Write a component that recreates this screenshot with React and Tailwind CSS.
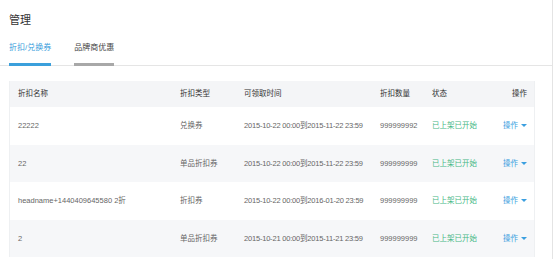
import React from "react";

const rows = [
  {
    name: "22222",
    type: "兑换券",
    time: "2015-10-22 00:00到2015-11-22 23:59",
    count: "999999992",
  },
  {
    name: "22",
    type: "单品折扣券",
    time: "2015-10-22 00:00到2015-11-22 23:59",
    count: "999999999",
  },
  {
    name: "headname+1440409645580 2折",
    type: "折扣券",
    time: "2015-10-22 00:00到2016-01-20 23:59",
    count: "999999999",
  },
  {
    name: "2",
    type: "单品折扣券",
    time: "2015-10-21 00:00到2015-11-21 23:59",
    count: "999999999",
  },
];

const cols =
  "grid grid-cols-[162px_64px_136px_52px_1fr_44px] items-center";

export default function App() {
  return (
    <div
      className="w-[553px] h-[259px] overflow-hidden bg-white border-r border-[#e4e4e4]"
      style={{ fontFamily: '"Liberation Sans", "Noto Sans CJK SC", sans-serif' }}
    >
      {/* Title */}
      <div className="pl-[9px] pt-[12px] text-[11px] leading-[16px] text-[#333]">
        管理
      </div>

      {/* Tabs */}
      <div className="mt-[14px] flex gap-[23px] pl-[9px] border-b border-[#e5e5e5]">
        <div className="text-[8px] leading-[12px] text-[#3ba0dc] pb-[9px] border-b-[3px] border-[#3ba0dc] -mb-px">
          折扣/兑换券
        </div>
        <div className="text-[8px] leading-[12px] text-[#444] pb-[9px] border-b-[3px] border-[#a8a8a8] -mb-px">
          品牌商优惠
        </div>
      </div>

      {/* Table */}
      <div className="mt-[15px] ml-[9px] w-[526px] border-x border-[#eef0f2] text-[7.5px]">
        <div className={`${cols} h-[26px] bg-[#f4f5f7] text-[#333]`}>
          <div className="pl-[8px]">折扣名称</div>
          <div className="pl-[8px]">折扣类型</div>
          <div className="pl-[8px]">可领取时间</div>
          <div className="pl-[8px]">折扣数量</div>
          <div className="pl-[8px]">状态</div>
          <div className="pr-[7px] text-right">操作</div>
        </div>

        {rows.map((item, i) => (
          <div
            key={i}
            className={`${cols} h-[37.5px] text-[#666] ${
              i % 2 === 1 ? "bg-[#f6f7f9]" : "bg-white"
            }`}
          >
            <div className="pl-[8px] whitespace-nowrap">{item.name}</div>
            <div className="pl-[8px] whitespace-nowrap">{item.type}</div>
            <div className="pl-[8px] whitespace-nowrap tracking-[-0.2px]">
              {item.time}
            </div>
            <div className="pl-[8px]">{item.count}</div>
            <div className="pl-[8px] whitespace-nowrap text-[#46b885]">
              已上架已开始
            </div>
            <div className="pr-[7px] flex items-center justify-end gap-[3px] whitespace-nowrap text-[#3b9fe0]">
              操作
              <span className="w-0 h-0 border-x-[3.5px] border-x-transparent border-t-[3.5px] border-t-[#3b9fe0]" />
            </div>
          </div>
        ))}
      </div>
    </div>
  );
}
